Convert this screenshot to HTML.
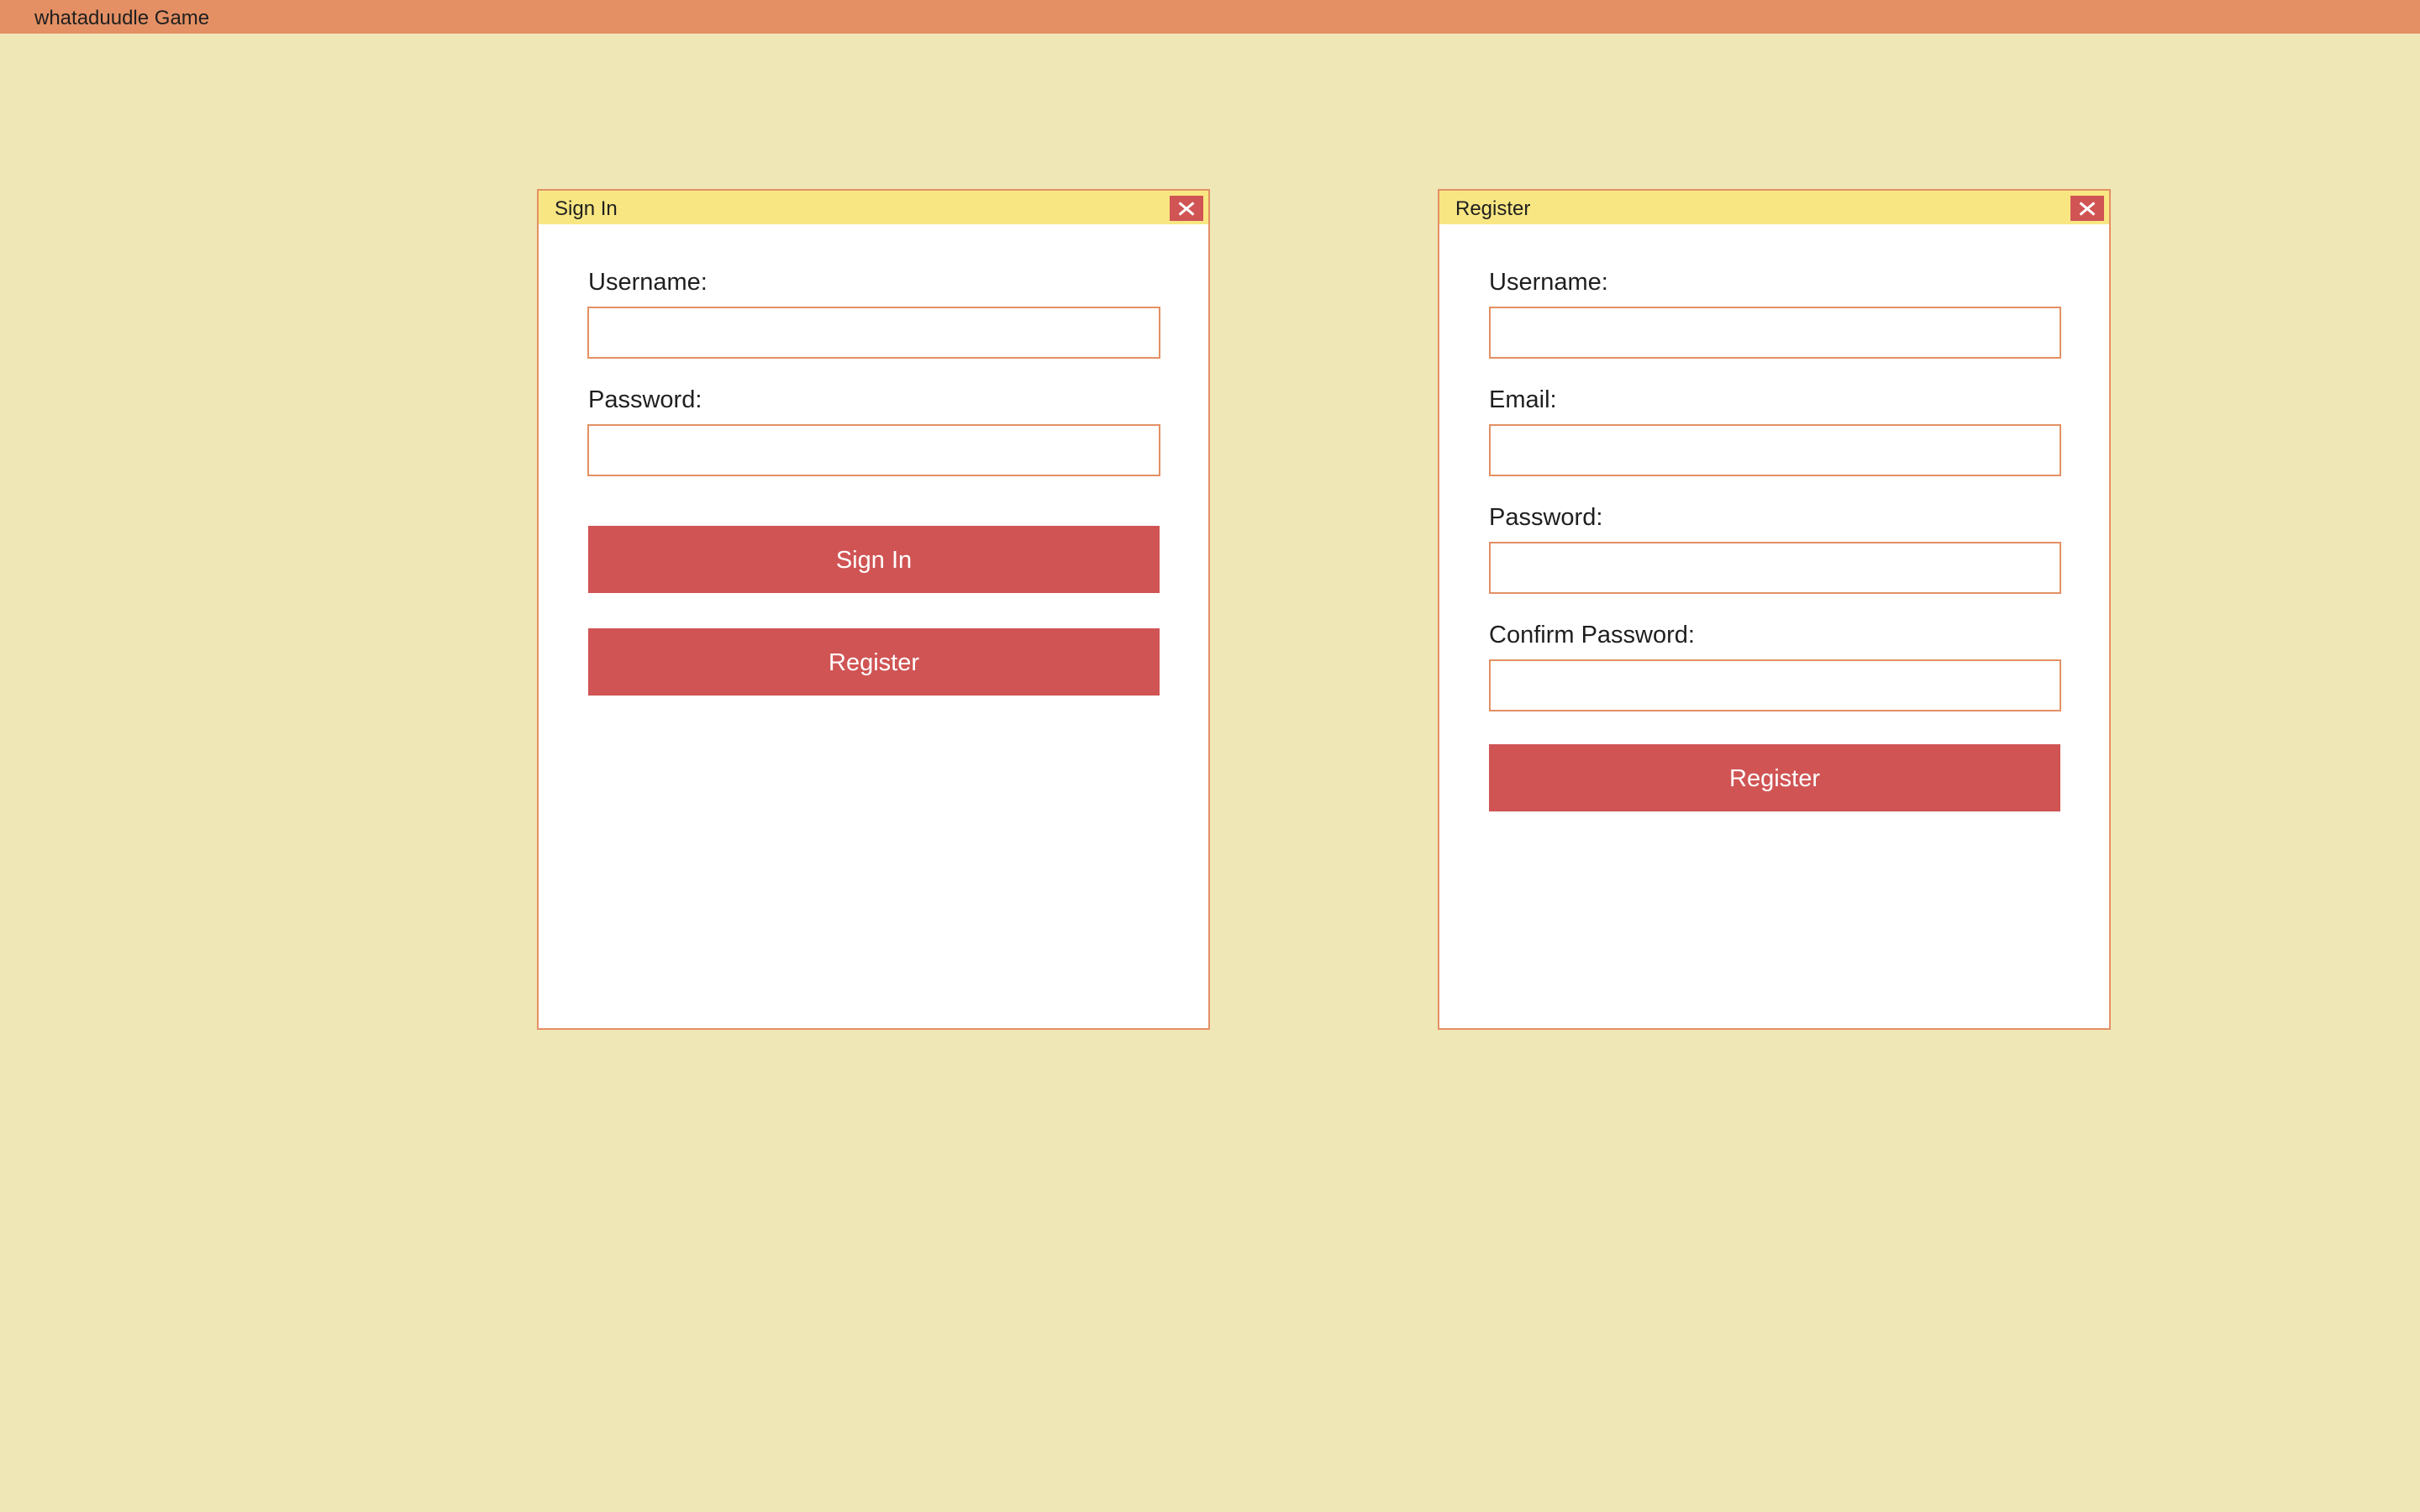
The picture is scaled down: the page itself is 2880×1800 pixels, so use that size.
<!DOCTYPE html>
<html><head><meta charset="utf-8"><style>
*{box-sizing:border-box;margin:0;padding:0}
body{width:2880px;height:1800px;background:#f0e7b7;font-family:"Liberation Sans",sans-serif;position:relative;overflow:hidden;color:#1f1f1f}
.top{position:absolute;left:0;top:0;width:2880px;height:40px;background:#e49064}
.top span{position:absolute;left:41px;top:8px;font-size:24px}
.win{position:absolute;top:225px;width:801px;height:1001px;background:#fff;border:2px solid #e49064}
.tb{position:absolute;left:0;top:0;right:0;height:40px;background:#f8e683}
.tb span{position:absolute;left:19px;top:8px;font-size:24px}
.x{position:absolute;right:6px;top:6px;width:40px;height:30px;background:#d05454}
.x:before,.x:after{content:"";position:absolute;left:9px;top:14px;width:22px;height:3px;background:#fff;transform:rotate(40deg)}
.x:after{transform:rotate(-40deg)}
.lab{position:absolute;font-size:29px}
.in{position:absolute;height:62px;border:2px solid #e49064;background:#fff}
.btn{position:absolute;height:80px;background:#d05454;color:#fff;font-size:29px;text-align:center;line-height:82px}
</style></head><body>
<div class="top"><span>whataduudle Game</span></div>

<div class="win" style="left:639px">
<div class="tb"><span>Sign In</span><div class="x"></div></div>
</div>
<div class="lab" style="left:700px;top:320px">Username:</div>
<div class="in" style="left:699px;top:365px;width:682px"></div>
<div class="lab" style="left:700px;top:460px">Password:</div>
<div class="in" style="left:699px;top:505px;width:682px"></div>
<div class="btn" style="left:700px;top:626px;width:680px">Sign In</div>
<div class="btn" style="left:700px;top:748px;width:680px">Register</div>

<div class="win" style="left:1711px">
<div class="tb"><span>Register</span><div class="x"></div></div>
</div>
<div class="lab" style="left:1772px;top:320px">Username:</div>
<div class="in" style="left:1772px;top:365px;width:681px"></div>
<div class="lab" style="left:1772px;top:460px">Email:</div>
<div class="in" style="left:1772px;top:505px;width:681px"></div>
<div class="lab" style="left:1772px;top:600px">Password:</div>
<div class="in" style="left:1772px;top:645px;width:681px"></div>
<div class="lab" style="left:1772px;top:740px">Confirm Password:</div>
<div class="in" style="left:1772px;top:785px;width:681px"></div>
<div class="btn" style="left:1772px;top:886px;width:680px">Register</div>
</body></html>
